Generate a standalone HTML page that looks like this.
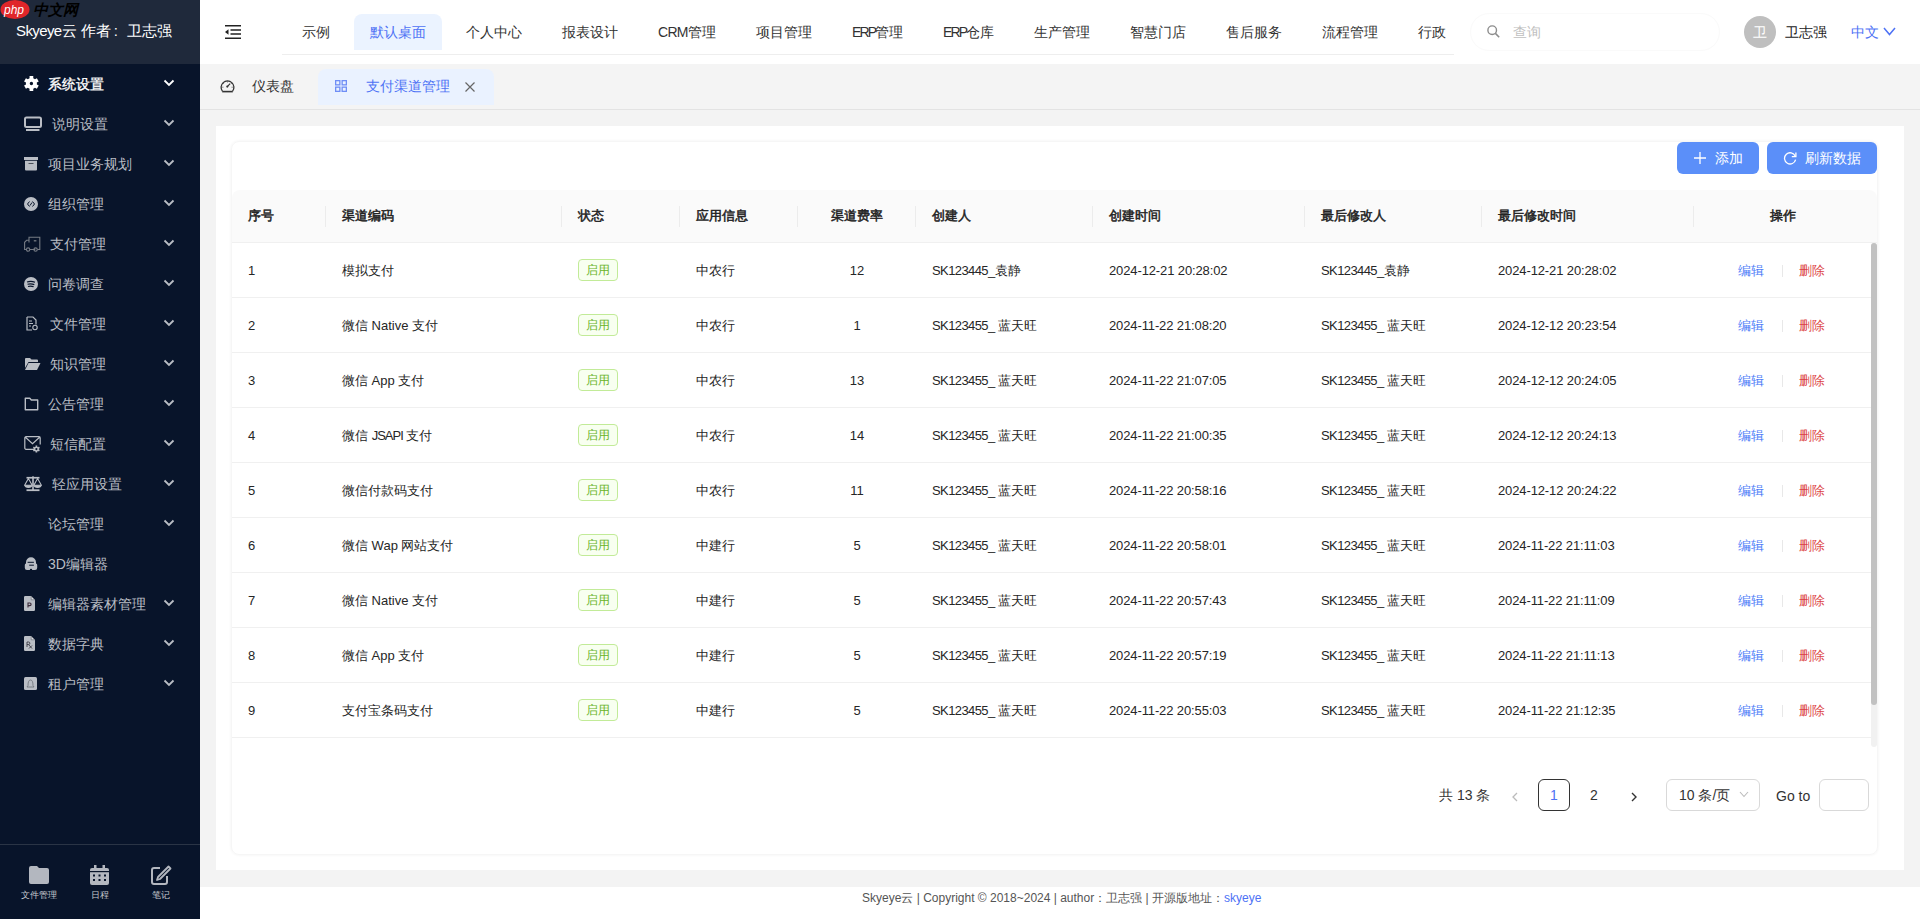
<!DOCTYPE html>
<html><head><meta charset="utf-8"><style>
*{box-sizing:border-box;margin:0;padding:0}
html,body{width:1920px;height:919px;overflow:hidden;background:#f3f3f3;font-family:"Liberation Sans",sans-serif;color:#222}
#side{position:absolute;left:0;top:0;width:200px;height:919px;background:#08142a}
#logo{position:absolute;left:0;top:0;width:200px;height:64px;background:#1f293b}
#logo .t{position:absolute;left:16px;top:21px;font-size:15px;line-height:20px;color:#fff;white-space:nowrap}
.mi{position:absolute;left:0;width:200px;height:40px;color:#babec5;font-size:14px}
.mi .tx{position:absolute;top:10px;line-height:20px;white-space:nowrap}
.mi svg.ic{position:absolute}
.mi .chev{position:absolute;left:163px;top:15px}
#sbot{position:absolute;left:0;top:844px;width:200px;height:75px;border-top:1px solid #2a3445}
.bi{position:absolute;top:0;width:60px;height:75px;color:#c6c9ce;font-size:9px;line-height:12px}
.bi svg{position:absolute}
.bi .bt{position:absolute;left:0;top:44px;width:60px;text-align:center;white-space:nowrap}
#top{position:absolute;left:200px;top:0;width:1720px;height:64px;background:#fff}
.nv{position:absolute;top:14px;height:36px;font-size:14px;line-height:36px;color:#333;white-space:nowrap}
#tabs{position:absolute;left:200px;top:64px;width:1720px;height:46px;background:#f4f4f4;border-bottom:1px solid #e3e3e3}
#card{position:absolute;left:216px;top:126px;width:1688px;height:744px;background:#fff}
#inner{position:absolute;left:15px;top:15px;width:1647px;height:714px;border-radius:8px;box-shadow:0 0 3px rgba(0,0,0,0.06);border:1px solid #f6f6f6}
.btn{position:absolute;top:0;height:32px;border-radius:6px;background:#5b8ff9;color:#fff;font-size:14px;line-height:32px;white-space:nowrap}
#thead{position:absolute;left:0;top:48px;width:1645px;height:53px;background:#fafafa;border-bottom:1px solid #f0f0f0;border-radius:8px 8px 0 0}
.th{position:absolute;top:0;height:52px;line-height:52px;font-size:13px;-webkit-text-stroke:0.5px #222;color:#222;white-space:nowrap}
.sep{position:absolute;top:16px;width:1px;height:21px;background:#ececec}
.tr{position:absolute;left:0;width:1639px;height:55px;border-bottom:1px solid #f0f0f0}
.td{position:absolute;top:1px;height:54px;line-height:54px;font-size:13px;color:#262626;white-space:nowrap}
.tag{position:absolute;top:16px;width:40px;height:22px;border:1px solid #c2eb98;background:#f8fff0;color:#68b428;border-radius:4px;font-size:12px;line-height:20px;text-align:center}
.ed{color:#4f7ef8}
.dl{color:#dc4446}
.asep{position:absolute;top:22px;width:1px;height:12px;background:#e8e8e8}
#foot{position:absolute;left:200px;top:887px;width:1720px;height:32px;background:#fff;font-size:12px;line-height:22px;color:#555}
</style></head><body>
<div id="side">
<div id="logo"><div class="t"><span style="letter-spacing:-0.6px">Skyeye</span>云 作者<span style="display:inline-block;width:16px;padding-left:3px">:</span>卫志强</div>
<svg style="position:absolute;left:0;top:0" width="84" height="20" viewBox="0 0 84 20">
<ellipse cx="15" cy="9.5" rx="14.5" ry="9.5" fill="#e0262a"/>
<text x="4" y="14" font-family="Liberation Sans" font-style="italic" font-size="12" fill="#fff">php</text>
<text x="33" y="15" font-family="Liberation Sans" font-style="italic" font-weight="bold" font-size="15" fill="#000">中文网</text>
</svg>
</div>
<div class="mi" style="top:64px;color:#fff">
<svg class="ic" style="left:24px;top:12px" width="15" height="15" viewBox="0 0 15 15"><path fill="#fff" fill-rule="evenodd" d="M5.55 2.32L5.55 0.10L9.25 0.10L9.25 2.32A5.50 5.50 0 0 1 10.96 3.31L12.88 2.20L14.73 5.40L12.81 6.51A5.50 5.50 0 0 1 12.81 8.49L14.73 9.60L12.88 12.80L10.96 11.69A5.50 5.50 0 0 1 9.25 12.68L9.25 14.90L5.55 14.90L5.55 12.68A5.50 5.50 0 0 1 3.84 11.69L1.92 12.80L0.07 9.60L1.99 8.49A5.50 5.50 0 0 1 1.99 6.51L0.07 5.40L1.92 2.20L3.84 3.31A5.50 5.50 0 0 1 5.55 2.32ZM5.70 7.50a1.70 1.70 0 1 0 3.40 0a1.70 1.70 0 1 0 -3.40 0Z"/></svg>
<div class="tx" style="left:48px;-webkit-text-stroke:0.3px #fff">系统设置</div>
<svg class="chev" width="12" height="8" viewBox="0 0 12 8"><path d="M1.5 1.5 L6 6 L10.5 1.5" stroke="#fff" stroke-width="1.8" fill="none"/></svg>
</div>
<div class="mi" style="top:104px;color:#babec5">
<svg class="ic" style="left:24px;top:12px" width="18" height="16" viewBox="0 0 18 16"><rect x="1" y="1.5" width="16" height="9.5" rx="1.5" stroke="#babec5" stroke-width="2" fill="none"/><rect x="2" y="13" width="13.5" height="2" fill="#babec5"/></svg>
<div class="tx" style="left:52px">说明设置</div>
<svg class="chev" width="12" height="8" viewBox="0 0 12 8"><path d="M1.5 1.5 L6 6 L10.5 1.5" stroke="#babec5" stroke-width="1.8" fill="none"/></svg>
</div>
<div class="mi" style="top:144px;color:#babec5">
<svg class="ic" style="left:24px;top:13px" width="14" height="14" viewBox="0 0 14 14"><rect x="0" y="0" width="14" height="3" fill="#babec5"/><path d="M1 3.7h12v8.8a1 1 0 0 1-1 1H2a1 1 0 0 1-1-1z" fill="#babec5"/><rect x="4.5" y="6" width="5" height="1" fill="#4a505a"/></svg>
<div class="tx" style="left:48px">项目业务规划</div>
<svg class="chev" width="12" height="8" viewBox="0 0 12 8"><path d="M1.5 1.5 L6 6 L10.5 1.5" stroke="#babec5" stroke-width="1.8" fill="none"/></svg>
</div>
<div class="mi" style="top:184px;color:#babec5">
<svg class="ic" style="left:24px;top:13px" width="14" height="14" viewBox="0 0 14 14"><circle cx="7" cy="7" r="7" fill="#babec5"/><path d="M5.5 4.5L3.5 7l2 2.5M8.5 4.5l2 2.5-2 2.5M6 8.5l2-3" stroke="#08142a" stroke-width="1" fill="none"/></svg>
<div class="tx" style="left:48px">组织管理</div>
<svg class="chev" width="12" height="8" viewBox="0 0 12 8"><path d="M1.5 1.5 L6 6 L10.5 1.5" stroke="#babec5" stroke-width="1.8" fill="none"/></svg>
</div>
<div class="mi" style="top:224px;color:#babec5">
<svg class="ic" style="left:24px;top:12px" width="17" height="17" viewBox="0 0 17 17"><g stroke="#767b84" stroke-width="1.1" fill="none"><path d="M5 6.5V1.2h10.8v12.3h-2.2M5 4.3H2.6L0.6 6.3v7.2h1.8M5.8 13.5h5.5"/><circle cx="4.1" cy="13.6" r="1.7"/><circle cx="11.6" cy="13.6" r="1.7"/></g><path d="M9.8 4.8h2.6" stroke="#767b84" stroke-width="1.3"/></svg>
<div class="tx" style="left:50px">支付管理</div>
<svg class="chev" width="12" height="8" viewBox="0 0 12 8"><path d="M1.5 1.5 L6 6 L10.5 1.5" stroke="#babec5" stroke-width="1.8" fill="none"/></svg>
</div>
<div class="mi" style="top:264px;color:#babec5">
<svg class="ic" style="left:24px;top:13px" width="14" height="14" viewBox="0 0 14 14"><circle cx="7" cy="7" r="7" fill="#babec5"/><path d="M3 5Q7 3.6 11 5.2M3.5 7.3Q7 6.2 10.3 7.6M4 9.5Q7 8.7 9.6 9.8" stroke="#08142a" stroke-width="1.2" fill="none"/></svg>
<div class="tx" style="left:48px">问卷调查</div>
<svg class="chev" width="12" height="8" viewBox="0 0 12 8"><path d="M1.5 1.5 L6 6 L10.5 1.5" stroke="#babec5" stroke-width="1.8" fill="none"/></svg>
</div>
<div class="mi" style="top:304px;color:#babec5">
<svg class="ic" style="left:26px;top:12px" width="12" height="15" viewBox="0 0 12 15"><path d="M1 1h6l3 3v4.5M1 1v13h5" stroke="#babec5" stroke-width="1.2" fill="none"/><path d="M3 5h3M3 7.5h4M3 10h2" stroke="#babec5" stroke-width="1"/><circle cx="9" cy="11.5" r="2.2" stroke="#babec5" stroke-width="1.1" fill="none"/></svg>
<div class="tx" style="left:50px">文件管理</div>
<svg class="chev" width="12" height="8" viewBox="0 0 12 8"><path d="M1.5 1.5 L6 6 L10.5 1.5" stroke="#babec5" stroke-width="1.8" fill="none"/></svg>
</div>
<div class="mi" style="top:344px;color:#babec5">
<svg class="ic" style="left:24px;top:13px" width="17" height="14" viewBox="0 0 17 14"><path d="M1 2a1 1 0 0 1 1-1h4l1.5 1.5H13a1 1 0 0 1 1 1V5H4.5L1 11z" fill="#babec5"/><path d="M4.5 6H16.5L13 13H1z" fill="#babec5"/></svg>
<div class="tx" style="left:50px">知识管理</div>
<svg class="chev" width="12" height="8" viewBox="0 0 12 8"><path d="M1.5 1.5 L6 6 L10.5 1.5" stroke="#babec5" stroke-width="1.8" fill="none"/></svg>
</div>
<div class="mi" style="top:384px;color:#babec5">
<svg class="ic" style="left:24px;top:13px" width="15" height="14" viewBox="0 0 15 14"><path d="M1.3 1.3h4.5l1.5 1.7h6.4v9.7H1.3z" stroke="#babec5" stroke-width="1.4" fill="none" stroke-linejoin="round"/></svg>
<div class="tx" style="left:48px">公告管理</div>
<svg class="chev" width="12" height="8" viewBox="0 0 12 8"><path d="M1.5 1.5 L6 6 L10.5 1.5" stroke="#babec5" stroke-width="1.8" fill="none"/></svg>
</div>
<div class="mi" style="top:424px;color:#babec5">
<svg class="ic" style="left:24px;top:12px" width="17" height="17" viewBox="0 0 17 17"><path d="M10 13.3H2a1.2 1.2 0 0 1-1.2-1.2V1.9A1.2 1.2 0 0 1 2 0.7h13a1.2 1.2 0 0 1 1.2 1.2v6.6M1.4 1.3L8.5 7.6 15.6 1.3" stroke="#babec5" stroke-width="1.2" fill="none"/><path fill="#babec5" fill-rule="evenodd" d="M11.55 10.75L11.55 9.60L13.25 9.60L13.25 10.75A2.50 2.50 0 0 1 14.01 11.19L15.01 10.61L15.86 12.09L14.86 12.66A2.50 2.50 0 0 1 14.86 13.54L15.86 14.11L15.01 15.59L14.01 15.01A2.50 2.50 0 0 1 13.25 15.45L13.25 16.60L11.55 16.60L11.55 15.45A2.50 2.50 0 0 1 10.79 15.01L9.79 15.59L8.94 14.11L9.94 13.54A2.50 2.50 0 0 1 9.94 12.66L8.94 12.09L9.79 10.61L10.79 11.19A2.50 2.50 0 0 1 11.55 10.75ZM11.30 13.10a1.10 1.10 0 1 0 2.20 0a1.10 1.10 0 1 0 -2.20 0Z"/></svg>
<div class="tx" style="left:50px">短信配置</div>
<svg class="chev" width="12" height="8" viewBox="0 0 12 8"><path d="M1.5 1.5 L6 6 L10.5 1.5" stroke="#babec5" stroke-width="1.8" fill="none"/></svg>
</div>
<div class="mi" style="top:464px;color:#babec5">
<svg class="ic" style="left:24px;top:12px" width="18" height="16" viewBox="0 0 18 16"><g fill="#babec5"><rect x="2.5" y="0.9" width="13" height="1.7"/><rect x="8.2" y="0.3" width="1.6" height="14"/><rect x="2.5" y="13.3" width="13" height="1.8"/><path d="M0.6 9.3L4.4 2.6 8.2 9.3z M9.8 9.3L13.6 2.6 17.4 9.3z" fill="none" stroke="#babec5" stroke-width="1.1"/><path d="M0.5 9.3h7.8a3.9 2.6 0 0 1-7.8 0z M9.7 9.3h7.8a3.9 2.6 0 0 1-7.8 0z"/></g></svg>
<div class="tx" style="left:52px">轻应用设置</div>
<svg class="chev" width="12" height="8" viewBox="0 0 12 8"><path d="M1.5 1.5 L6 6 L10.5 1.5" stroke="#babec5" stroke-width="1.8" fill="none"/></svg>
</div>
<div class="mi" style="top:504px;color:#babec5">
<div class="tx" style="left:48px">论坛管理</div>
<svg class="chev" width="12" height="8" viewBox="0 0 12 8"><path d="M1.5 1.5 L6 6 L10.5 1.5" stroke="#babec5" stroke-width="1.8" fill="none"/></svg>
</div>
<div class="mi" style="top:544px;color:#babec5">
<svg class="ic" style="left:24px;top:13px" width="14" height="14" viewBox="0 0 14 14"><path d="M2 5.2A5 5 0 0 1 12 5.2V6.6a1.4 1.4 0 0 1 1.2 1.4v2.8A2.2 2.2 0 0 1 11 13H8.2a1.2 1.2 0 0 0-2.4 0H3A2.2 2.2 0 0 1 0.8 10.8V8A1.4 1.4 0 0 1 2 6.6z" fill="#babec5"/><path d="M3.6 5.3h6.3M5.2 8.2h4.7" stroke="#08142a" stroke-width="1"/></svg>
<div class="tx" style="left:48px">3D编辑器</div>
</div>
<div class="mi" style="top:584px;color:#babec5">
<svg class="ic" style="left:24px;top:12px" width="12" height="16" viewBox="0 0 12 16"><path d="M0 1.2A1.2 1.2 0 0 1 1.2 0H7.2L11 3.8V13.8A1.2 1.2 0 0 1 9.8 15H1.2A1.2 1.2 0 0 1 0 13.8z" fill="#babec5"/><path d="M7.2 0.2V3.8H10.8z" fill="#dfe1e5" stroke="#5d626b" stroke-width="0.6"/><path d="M4 11.5V7h1.8a1.3 1.3 0 0 1 0 2.6H4" stroke="#3a2a3a" stroke-width="1.1" fill="none"/></svg>
<div class="tx" style="left:48px">编辑器素材管理</div>
<svg class="chev" width="12" height="8" viewBox="0 0 12 8"><path d="M1.5 1.5 L6 6 L10.5 1.5" stroke="#babec5" stroke-width="1.8" fill="none"/></svg>
</div>
<div class="mi" style="top:624px;color:#babec5">
<svg class="ic" style="left:24px;top:12px" width="12" height="16" viewBox="0 0 12 16"><path d="M0 1.2A1.2 1.2 0 0 1 1.2 0H7.2L11 3.8V13.8A1.2 1.2 0 0 1 9.8 15H1.2A1.2 1.2 0 0 1 0 13.8z" fill="#babec5"/><path d="M7.2 0.2V3.8H10.8z" fill="#dfe1e5" stroke="#5d626b" stroke-width="0.6"/><path d="M3 11V6h1.6a1.2 1.2 0 0 1 0 2.5H3M4.5 8.5L8 12.5M8 9.5l-3 3" stroke="#3a3a44" stroke-width="0.9" fill="none"/></svg>
<div class="tx" style="left:48px">数据字典</div>
<svg class="chev" width="12" height="8" viewBox="0 0 12 8"><path d="M1.5 1.5 L6 6 L10.5 1.5" stroke="#babec5" stroke-width="1.8" fill="none"/></svg>
</div>
<div class="mi" style="top:664px;color:#babec5">
<svg class="ic" style="left:24px;top:13px" width="13" height="13" viewBox="0 0 13 13"><rect x="0" y="0" width="13" height="13" rx="1.5" fill="#babec5"/><path d="M4 8.5Q4 3 6.5 3T9 8.5L10 10H3z" stroke="#6a6e75" stroke-width="0.8" fill="none"/></svg>
<div class="tx" style="left:48px">租户管理</div>
<svg class="chev" width="12" height="8" viewBox="0 0 12 8"><path d="M1.5 1.5 L6 6 L10.5 1.5" stroke="#babec5" stroke-width="1.8" fill="none"/></svg>
</div>
<div id="sbot">
<div class="bi" style="left:9px"><svg style="left:20px;top:21px" width="20" height="18" viewBox="0 0 20 18"><path d="M0 2a2 2 0 0 1 2-2h6l2 2h8a2 2 0 0 1 2 2v12a2 2 0 0 1-2 2H2a2 2 0 0 1-2-2z" fill="#b3b7bf"/></svg><div class="bt">文件管理</div></div>
<div class="bi" style="left:70px"><svg style="left:20px;top:20px" width="19" height="20" viewBox="0 0 19 20"><rect x="0" y="3" width="19" height="17" rx="2" fill="#b3b7bf"/><rect x="4" y="0" width="2.5" height="5" fill="#b3b7bf"/><rect x="12.5" y="0" width="2.5" height="5" fill="#b3b7bf"/><rect x="0" y="6" width="19" height="1.2" fill="#08142a"/><g fill="#08142a"><rect x="3" y="9.5" width="2" height="2"/><rect x="8.5" y="9.5" width="2" height="2"/><rect x="14" y="9.5" width="2" height="2"/><rect x="3" y="14" width="2" height="2"/><rect x="8.5" y="14" width="2" height="2"/><rect x="14" y="14" width="2" height="2"/></g></svg><div class="bt">日程</div></div>
<div class="bi" style="left:131px"><svg style="left:20px;top:20px" width="21" height="20" viewBox="0 0 21 20"><path d="M9 3H3a2 2 0 0 0-2 2v12a2 2 0 0 0 2 2h11a2 2 0 0 0 2-2v-6" stroke="#b3b7bf" stroke-width="2" fill="none"/><path d="M17.5 1.5l2 2L9 14l-3 1 1-3z" stroke="#b3b7bf" stroke-width="1.8" fill="none" stroke-linejoin="round"/></svg><div class="bt">笔记</div></div>
</div>
</div>
<div id="top">
<svg style="position:absolute;left:25px;top:25px" width="16" height="14" viewBox="0 0 16 14"><path d="M0 0.75h16M5.5 5h10.5M5.5 9h10.5M0 13.25h16" stroke="#222" stroke-width="1.5"/><path d="M0 7L3.5 4.2v5.6z" fill="#222"/></svg>
<div style="position:absolute;left:82px;top:54px;width:1172px;height:1px;background:#eee"></div>
<div style="position:absolute;left:154px;top:14px;width:88px;height:36px;background:#ebf3ff;border-radius:8px 8px 0 0"></div>
<div class="nv" style="left:102px;color:#333">示例</div>
<div class="nv" style="left:170px;color:#4e72f5">默认桌面</div>
<div class="nv" style="left:266px;color:#333">个人中心</div>
<div class="nv" style="left:362px;color:#333">报表设计</div>
<div class="nv" style="left:458px;color:#333"><span style="letter-spacing:-0.7px">CRM</span>管理</div>
<div class="nv" style="left:556px;color:#333">项目管理</div>
<div class="nv" style="left:652px;color:#333"><span style="letter-spacing:-1.8px">ERP</span>管理</div>
<div class="nv" style="left:743px;color:#333"><span style="letter-spacing:-1.8px">ERP</span>仓库</div>
<div class="nv" style="left:834px;color:#333">生产管理</div>
<div class="nv" style="left:930px;color:#333">智慧门店</div>
<div class="nv" style="left:1026px;color:#333">售后服务</div>
<div class="nv" style="left:1122px;color:#333">流程管理</div>
<div class="nv" style="left:1218px;color:#333">行政</div>
<div style="position:absolute;left:1270px;top:13px;width:250px;height:38px;border:1px solid #fafafa;border-radius:19px"></div>
<svg style="position:absolute;left:1287px;top:25px" width="13" height="13" viewBox="0 0 13 13"><circle cx="5.2" cy="5.2" r="4.3" stroke="#8c8c8c" stroke-width="1.4" fill="none"/><path d="M8.4 8.4L12.2 12.2" stroke="#8c8c8c" stroke-width="1.5"/></svg>
<div class="nv" style="left:1313px;color:#c0c0c0">查询</div>
<div style="position:absolute;left:1544px;top:16px;width:32px;height:32px;border-radius:50%;background:#bfbfbf;color:#fff;font-size:14px;line-height:32px;text-align:center">卫</div>
<div class="nv" style="left:1585px;color:#222">卫志强</div>
<div class="nv" style="left:1651px;color:#4e72f5">中文</div>
<svg style="position:absolute;left:1683px;top:27px" width="13" height="9" viewBox="0 0 13 9"><path d="M1 1l5.5 6.5L12 1" stroke="#4e72f5" stroke-width="1.5" fill="none"/></svg>
</div>
<div id="tabs">
<svg style="position:absolute;left:20px;top:15px" width="15" height="14" viewBox="0 0 15 14"><path d="M2.4 12.2A6.4 6.4 0 1 1 12.6 12.2" stroke="#333" stroke-width="1.3" fill="none"/><path d="M2.2 12.6h10.6" stroke="#333" stroke-width="1.6"/><path d="M7.5 7.4L10.2 4.6" stroke="#333" stroke-width="1.2"/><circle cx="7.3" cy="7.6" r="1.1" fill="#333"/><path d="M7.5 2.3v1.1M3.2 4.2l0.8 0.7M11.8 4.2l-0.8 0.7M2.3 8.2h1.1M12.7 8.2h-1.1" stroke="#555" stroke-width="0.9"/></svg>
<div class="nv" style="left:52px;top:0;height:46px;line-height:44px;color:#333">仪表盘</div>
<div style="position:absolute;left:118px;top:5px;width:176px;height:36px;background:#eaf2ff;border-radius:8px 8px 0 0"></div>
<svg style="position:absolute;left:135px;top:16px" width="12" height="12" viewBox="0 0 12 12"><g stroke="#6f8ef6" stroke-width="1.3" fill="none"><rect x="0.65" y="0.65" width="4.2" height="4.2"/><rect x="7.15" y="0.65" width="4.2" height="4.2"/><rect x="0.65" y="7.15" width="4.2" height="4.2"/><rect x="7.15" y="7.15" width="4.2" height="4.2"/></g></svg>
<div class="nv" style="left:166px;top:0;height:46px;line-height:44px;color:#4e72f5">支付渠道管理</div>
<svg style="position:absolute;left:265px;top:18px" width="10" height="10" viewBox="0 0 10 10"><path d="M0.5 0.5l9 9M9.5 0.5l-9 9" stroke="#666" stroke-width="1.2"/></svg>
</div>
<div id="card"><div id="inner">
<div class="btn" style="left:1445px;width:82px"><svg style="position:absolute;left:17px;top:10px" width="12" height="12" viewBox="0 0 12 12"><path d="M6 0v12M0 6h12" stroke="#fff" stroke-width="1.3"/></svg><span style="position:absolute;left:38px">添加</span></div>
<div class="btn" style="left:1535px;width:110px"><svg style="position:absolute;left:16px;top:9px" width="14" height="14" viewBox="0 0 14 14"><path d="M12.2 5A5.6 5.6 0 1 0 12.6 8.6" stroke="#fff" stroke-width="1.3" fill="none"/><path d="M12.9 1.5v4.1H8.8" stroke="#fff" stroke-width="1.3" fill="none"/></svg><span style="position:absolute;left:38px">刷新数据</span></div>
<div id="thead">
<div class="th" style="left:16px">序号</div>
<div class="sep" style="left:93px"></div>
<div class="th" style="left:110px">渠道编码</div>
<div class="sep" style="left:329px"></div>
<div class="th" style="left:346px">状态</div>
<div class="sep" style="left:447px"></div>
<div class="th" style="left:464px">应用信息</div>
<div class="sep" style="left:565px"></div>
<div class="th" style="left:566px;width:118px;text-align:center">渠道费率</div>
<div class="sep" style="left:683px"></div>
<div class="th" style="left:700px">创建人</div>
<div class="sep" style="left:860px"></div>
<div class="th" style="left:877px">创建时间</div>
<div class="sep" style="left:1072px"></div>
<div class="th" style="left:1089px">最后修改人</div>
<div class="sep" style="left:1249px"></div>
<div class="th" style="left:1266px">最后修改时间</div>
<div class="sep" style="left:1461px"></div>
<div class="th" style="left:1462px;width:178px;text-align:center">操作</div>
</div>
<div class="tr" style="top:101px">
<div class="td" style="left:16px">1</div>
<div class="td" style="left:110px">模拟支付</div>
<div class="tag" style="left:346px">启用</div>
<div class="td" style="left:464px">中农行</div>
<div class="td" style="left:566px;width:118px;text-align:center">12</div>
<div class="td" style="left:700px"><span style="letter-spacing:-0.6px">SK123445_</span>袁静</div>
<div class="td" style="left:877px"><span style="letter-spacing:-0.12px">2024-12-21 20:28:02</span></div>
<div class="td" style="left:1089px"><span style="letter-spacing:-0.6px">SK123445_</span>袁静</div>
<div class="td" style="left:1266px"><span style="letter-spacing:-0.12px">2024-12-21 20:28:02</span></div>
<div class="td ed" style="left:1506px">编辑</div><div class="asep" style="left:1550px"></div><div class="td dl" style="left:1567px">删除</div>
</div>
<div class="tr" style="top:156px">
<div class="td" style="left:16px">2</div>
<div class="td" style="left:110px">微信 Native 支付</div>
<div class="tag" style="left:346px">启用</div>
<div class="td" style="left:464px">中农行</div>
<div class="td" style="left:566px;width:118px;text-align:center">1</div>
<div class="td" style="left:700px"><span style="letter-spacing:-0.6px">SK123455_ </span>蓝天旺</div>
<div class="td" style="left:877px"><span style="letter-spacing:-0.12px">2024-11-22 21:08:20</span></div>
<div class="td" style="left:1089px"><span style="letter-spacing:-0.6px">SK123455_ </span>蓝天旺</div>
<div class="td" style="left:1266px"><span style="letter-spacing:-0.12px">2024-12-12 20:23:54</span></div>
<div class="td ed" style="left:1506px">编辑</div><div class="asep" style="left:1550px"></div><div class="td dl" style="left:1567px">删除</div>
</div>
<div class="tr" style="top:211px">
<div class="td" style="left:16px">3</div>
<div class="td" style="left:110px">微信 App 支付</div>
<div class="tag" style="left:346px">启用</div>
<div class="td" style="left:464px">中农行</div>
<div class="td" style="left:566px;width:118px;text-align:center">13</div>
<div class="td" style="left:700px"><span style="letter-spacing:-0.6px">SK123455_ </span>蓝天旺</div>
<div class="td" style="left:877px"><span style="letter-spacing:-0.12px">2024-11-22 21:07:05</span></div>
<div class="td" style="left:1089px"><span style="letter-spacing:-0.6px">SK123455_ </span>蓝天旺</div>
<div class="td" style="left:1266px"><span style="letter-spacing:-0.12px">2024-12-12 20:24:05</span></div>
<div class="td ed" style="left:1506px">编辑</div><div class="asep" style="left:1550px"></div><div class="td dl" style="left:1567px">删除</div>
</div>
<div class="tr" style="top:266px">
<div class="td" style="left:16px">4</div>
<div class="td" style="left:110px">微信 <span style="letter-spacing:-1px">JSAPI</span> 支付</div>
<div class="tag" style="left:346px">启用</div>
<div class="td" style="left:464px">中农行</div>
<div class="td" style="left:566px;width:118px;text-align:center">14</div>
<div class="td" style="left:700px"><span style="letter-spacing:-0.6px">SK123455_ </span>蓝天旺</div>
<div class="td" style="left:877px"><span style="letter-spacing:-0.12px">2024-11-22 21:00:35</span></div>
<div class="td" style="left:1089px"><span style="letter-spacing:-0.6px">SK123455_ </span>蓝天旺</div>
<div class="td" style="left:1266px"><span style="letter-spacing:-0.12px">2024-12-12 20:24:13</span></div>
<div class="td ed" style="left:1506px">编辑</div><div class="asep" style="left:1550px"></div><div class="td dl" style="left:1567px">删除</div>
</div>
<div class="tr" style="top:321px">
<div class="td" style="left:16px">5</div>
<div class="td" style="left:110px">微信付款码支付</div>
<div class="tag" style="left:346px">启用</div>
<div class="td" style="left:464px">中农行</div>
<div class="td" style="left:566px;width:118px;text-align:center">11</div>
<div class="td" style="left:700px"><span style="letter-spacing:-0.6px">SK123455_ </span>蓝天旺</div>
<div class="td" style="left:877px"><span style="letter-spacing:-0.12px">2024-11-22 20:58:16</span></div>
<div class="td" style="left:1089px"><span style="letter-spacing:-0.6px">SK123455_ </span>蓝天旺</div>
<div class="td" style="left:1266px"><span style="letter-spacing:-0.12px">2024-12-12 20:24:22</span></div>
<div class="td ed" style="left:1506px">编辑</div><div class="asep" style="left:1550px"></div><div class="td dl" style="left:1567px">删除</div>
</div>
<div class="tr" style="top:376px">
<div class="td" style="left:16px">6</div>
<div class="td" style="left:110px">微信 Wap 网站支付</div>
<div class="tag" style="left:346px">启用</div>
<div class="td" style="left:464px">中建行</div>
<div class="td" style="left:566px;width:118px;text-align:center">5</div>
<div class="td" style="left:700px"><span style="letter-spacing:-0.6px">SK123455_ </span>蓝天旺</div>
<div class="td" style="left:877px"><span style="letter-spacing:-0.12px">2024-11-22 20:58:01</span></div>
<div class="td" style="left:1089px"><span style="letter-spacing:-0.6px">SK123455_ </span>蓝天旺</div>
<div class="td" style="left:1266px"><span style="letter-spacing:-0.12px">2024-11-22 21:11:03</span></div>
<div class="td ed" style="left:1506px">编辑</div><div class="asep" style="left:1550px"></div><div class="td dl" style="left:1567px">删除</div>
</div>
<div class="tr" style="top:431px">
<div class="td" style="left:16px">7</div>
<div class="td" style="left:110px">微信 Native 支付</div>
<div class="tag" style="left:346px">启用</div>
<div class="td" style="left:464px">中建行</div>
<div class="td" style="left:566px;width:118px;text-align:center">5</div>
<div class="td" style="left:700px"><span style="letter-spacing:-0.6px">SK123455_ </span>蓝天旺</div>
<div class="td" style="left:877px"><span style="letter-spacing:-0.12px">2024-11-22 20:57:43</span></div>
<div class="td" style="left:1089px"><span style="letter-spacing:-0.6px">SK123455_ </span>蓝天旺</div>
<div class="td" style="left:1266px"><span style="letter-spacing:-0.12px">2024-11-22 21:11:09</span></div>
<div class="td ed" style="left:1506px">编辑</div><div class="asep" style="left:1550px"></div><div class="td dl" style="left:1567px">删除</div>
</div>
<div class="tr" style="top:486px">
<div class="td" style="left:16px">8</div>
<div class="td" style="left:110px">微信 App 支付</div>
<div class="tag" style="left:346px">启用</div>
<div class="td" style="left:464px">中建行</div>
<div class="td" style="left:566px;width:118px;text-align:center">5</div>
<div class="td" style="left:700px"><span style="letter-spacing:-0.6px">SK123455_ </span>蓝天旺</div>
<div class="td" style="left:877px"><span style="letter-spacing:-0.12px">2024-11-22 20:57:19</span></div>
<div class="td" style="left:1089px"><span style="letter-spacing:-0.6px">SK123455_ </span>蓝天旺</div>
<div class="td" style="left:1266px"><span style="letter-spacing:-0.12px">2024-11-22 21:11:13</span></div>
<div class="td ed" style="left:1506px">编辑</div><div class="asep" style="left:1550px"></div><div class="td dl" style="left:1567px">删除</div>
</div>
<div class="tr" style="top:541px">
<div class="td" style="left:16px">9</div>
<div class="td" style="left:110px">支付宝条码支付</div>
<div class="tag" style="left:346px">启用</div>
<div class="td" style="left:464px">中建行</div>
<div class="td" style="left:566px;width:118px;text-align:center">5</div>
<div class="td" style="left:700px"><span style="letter-spacing:-0.6px">SK123455_ </span>蓝天旺</div>
<div class="td" style="left:877px"><span style="letter-spacing:-0.12px">2024-11-22 20:55:03</span></div>
<div class="td" style="left:1089px"><span style="letter-spacing:-0.6px">SK123455_ </span>蓝天旺</div>
<div class="td" style="left:1266px"><span style="letter-spacing:-0.12px">2024-11-22 21:12:35</span></div>
<div class="td ed" style="left:1506px">编辑</div><div class="asep" style="left:1550px"></div><div class="td dl" style="left:1567px">删除</div>
</div>
<div style="position:absolute;left:1639px;top:101px;width:6px;height:504px;background:#f1f1f1;border-radius:3px"></div>
<div style="position:absolute;left:1639px;top:101px;width:6px;height:462px;background:#c1c1c1;border-radius:3px"></div>
<div style="position:absolute;left:1207px;top:637px;font-size:14px;line-height:32px;color:#333;white-space:nowrap">共 13 条</div>
<svg style="position:absolute;left:1279px;top:650px" width="8" height="10" viewBox="0 0 8 10"><path d="M6 1L2 5l4 4" stroke="#bbb" stroke-width="1.3" fill="none"/></svg>
<div style="position:absolute;left:1306px;top:637px;width:32px;height:32px;border:1px solid #333;border-radius:6px;font-size:14px;line-height:30px;text-align:center;color:#4e72f5">1</div>
<div style="position:absolute;left:1346px;top:637px;width:32px;height:32px;font-size:14px;line-height:32px;text-align:center;color:#333">2</div>
<svg style="position:absolute;left:1398px;top:650px" width="8" height="10" viewBox="0 0 8 10"><path d="M2 1l4 4-4 4" stroke="#333" stroke-width="1.4" fill="none"/></svg>
<div style="position:absolute;left:1434px;top:637px;width:94px;height:32px;border:1px solid #d9d9d9;border-radius:6px;font-size:14px;line-height:30px;color:#333;white-space:nowrap"><span style="position:absolute;left:12px">10 条/页</span><svg style="position:absolute;left:72px;top:11px" width="10" height="7" viewBox="0 0 10 7"><path d="M1 1l4 4.5L9 1" stroke="#bbb" stroke-width="1.1" fill="none"/></svg></div>
<div style="position:absolute;left:1544px;top:638px;font-size:14px;line-height:32px;color:#333;white-space:nowrap">Go to</div>
<div style="position:absolute;left:1587px;top:637px;width:50px;height:32px;border:1px solid #d9d9d9;border-radius:6px"></div>
</div></div>
<div id="foot"><div style="position:absolute;left:662px;top:0;white-space:nowrap">Skyeye云 | Copyright © 2018~2024 | author：卫志强 | 开源版地址：<span style="color:#4e72f5">skyeye</span></div></div>
</body></html>
